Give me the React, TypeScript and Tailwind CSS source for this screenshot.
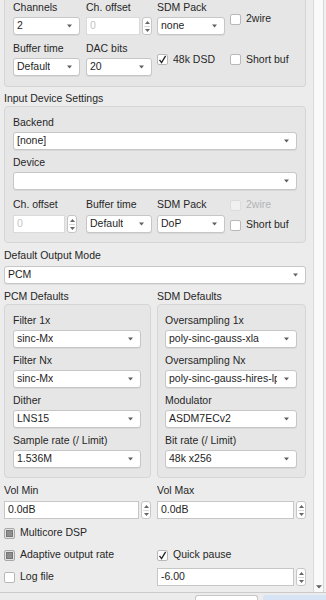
import { ReactNode } from "react";

const font = { fontFamily: '"Liberation Sans", Arial, sans-serif' };

// small label that sits above a control
const Label = ({ children, muted }: { children: ReactNode; muted?: boolean }) => (
  <div className={`h-[12px] leading-[12px] text-[10.5px] whitespace-nowrap ${muted ? "text-[#b4b4b4]" : "text-[#262626]"}`}>
    {children}
  </div>
);

const Arrow = () => (
  <svg width="5" height="4" viewBox="0 0 5 4" className="shrink-0">
    <path d="M0 0.5 L5 0.5 L2.5 3.5 Z" fill="#5f5f5f" />
  </svg>
);

const Combo = ({ value, w, clip }: { value?: string; w?: string; clip?: boolean }) => (
  <div
    className={`h-[18px] ${w ?? "w-full"} bg-white border border-[#c6c6c6] rounded-[3px] shadow-[0_1px_0_rgba(0,0,0,0.06)] flex items-center justify-between pl-[3px] pr-[7px] text-[10.5px] text-[#1e1e1e] overflow-hidden`}
  >
    <span className={`whitespace-nowrap overflow-hidden mr-[5px] ${clip ? "w-[108px]" : ""}`}>{value}</span>
    <Arrow />
  </div>
);

const Stepper = () => (
  <div className="w-[10px] h-full ml-[2px] bg-white border border-[#c6c6c6] rounded-[3px] flex flex-col items-center justify-center gap-[2px] shrink-0">
    <svg width="5" height="3" viewBox="0 0 5 3">
      <path d="M0 3 L5 3 L2.5 0 Z" fill="#666" />
    </svg>
    <div className="w-[6px] h-px bg-[#d8d8d8]" />
    <svg width="5" height="3" viewBox="0 0 5 3">
      <path d="M0 0 L5 0 L2.5 3 Z" fill="#666" />
    </svg>
  </div>
);

const Spin = ({ value, w, disabled }: { value: string; w?: string; disabled?: boolean }) => (
  <div className={`h-[18px] ${w ?? "w-full"} flex`}>
    <div
      className={`flex-1 h-full bg-white border ${disabled ? "border-[#dadada] text-[#c4c4c4]" : "border-[#c6c6c6] text-[#1e1e1e]"} flex items-center pl-[3px] text-[10.5px]`}
    >
      {value}
    </div>
    <Stepper />
  </div>
);

const Check = ({
  label,
  checked,
  mixed,
  disabled,
}: {
  label: string;
  checked?: boolean;
  mixed?: boolean;
  disabled?: boolean;
}) => (
  <div className="flex items-center gap-[5px] whitespace-nowrap">
    <div
      className={`w-[11px] h-[11px] rounded-[2px] border flex items-center justify-center shrink-0 ${
        disabled
          ? "border-[#dcdcdc] bg-[#f1f1f1]"
          : mixed
          ? "border-[#a8a8a8] bg-[#e2e2e2]"
          : "border-[#b8b8b8] bg-white"
      }`}
    >
      {checked && (
        <svg width="9" height="9" viewBox="0 0 9 9">
          <path d="M1.5 4.8 L3.6 7.6 L7.6 0.8" fill="none" stroke="#222" strokeWidth="1.3" />
        </svg>
      )}
      {mixed && <div className="w-[7px] h-[7px] bg-[#8e8e8e] border border-[#767676]" />}
    </div>
    <span className={`text-[10.5px] ${disabled ? "text-[#b4b4b4]" : "text-[#262626]"}`}>{label}</span>
  </div>
);

const Field = ({ label, children }: { label: string; children: ReactNode }) => (
  <div className="flex flex-col gap-[4px]">
    <Label>{label}</Label>
    {children}
  </div>
);

const Group = ({ children, className }: { children: ReactNode; className?: string }) => (
  <div className={`bg-[#e6e6e6] border border-[#d5d5d5] rounded-[4px] ${className ?? ""}`}>{children}</div>
);

export default function App() {
  return (
    <div className="w-[326px] h-[600px] overflow-hidden bg-[#ececec] flex flex-col" style={font}>
      <div className="flex h-[592px]">
        {/* main settings column */}
        <div className="w-[313px] pl-[4px] pr-[7px] flex flex-col">
          {/* output device group, top edge scrolled out of view */}
          <Group className="border-t-0 rounded-t-none pt-[1px] pb-[10px] pl-[8px]">
            <div className="grid grid-cols-[68px_66px_68px_1fr] gap-x-[5px] gap-y-[7px]">
              <Field label="Channels">
                <Combo value="2" w="w-[67px]" />
              </Field>
              <Field label="Ch. offset">
                <Spin value="0" disabled />
              </Field>
              <Field label="SDM Pack">
                <Combo value="none" />
              </Field>
              <div className="flex items-center pt-[2px]">
                <Check label="2wire" />
              </div>
              <Field label="Buffer time">
                <Combo value="Default" w="w-[67px]" />
              </Field>
              <Field label="DAC bits">
                <Combo value="20" />
              </Field>
              <div className="flex items-center pt-[1px]">
                <Check label="48k DSD" checked />
              </div>
              <div className="flex items-center pt-[1px]">
                <Check label="Short buf" />
              </div>
            </div>
          </Group>

          <div className="mt-[5px] mb-[2px]">
            <Label>Input Device Settings</Label>
          </div>
          <Group className="pt-[9px] pb-[9px] pl-[8px] pr-[8px]">
            <Field label="Backend">
              <Combo value="[none]" />
            </Field>
            <div className="mt-[6px]">
              <Field label="Device">
                <Combo />
              </Field>
            </div>
            <div className="mt-[6px] grid grid-cols-[68px_66px_68px_1fr] gap-x-[5px] gap-y-[4px]">
              <div className="h-[15px] flex items-center">
                <Label>Ch. offset</Label>
              </div>
              <div className="h-[15px] flex items-center">
                <Label>Buffer time</Label>
              </div>
              <div className="h-[15px] flex items-center">
                <Label>SDM Pack</Label>
              </div>
              <div className="h-[15px] flex items-center pt-[3px]">
                <Check label="2wire" disabled />
              </div>
              <Spin value="0" w="w-[64px]" disabled />
              <Combo value="Default" />
              <Combo value="DoP" />
              <div className="flex items-center pt-[2px]">
                <Check label="Short buf" />
              </div>
            </div>
          </Group>

          <div className="mt-[6px]">
            <Label>Default Output Mode</Label>
          </div>
          <div className="mt-[5px]">
            <Combo value="PCM" />
          </div>

          <div className="mt-[6px] grid grid-cols-[147px_149px] gap-x-[6px]">
            <div className="mb-[2px]">
              <Label>PCM Defaults</Label>
            </div>
            <div className="mb-[2px]">
              <Label>SDM Defaults</Label>
            </div>
            <Group className="pt-[9px] pb-[9px] pl-[8px] pr-[9px] flex flex-col gap-[6px]">
              <Field label="Filter 1x">
                <Combo value="sinc-Mx" />
              </Field>
              <Field label="Filter Nx">
                <Combo value="sinc-Mx" />
              </Field>
              <Field label="Dither">
                <Combo value="LNS15" />
              </Field>
              <Field label="Sample rate (/ Limit)">
                <Combo value="1.536M" />
              </Field>
            </Group>
            <Group className="pt-[9px] pb-[9px] pl-[7px] pr-[8px] flex flex-col gap-[6px]">
              <Field label="Oversampling 1x">
                <Combo value="poly-sinc-gauss-xla" />
              </Field>
              <Field label="Oversampling Nx">
                <Combo value="poly-sinc-gauss-hires-lp" clip />
              </Field>
              <Field label="Modulator">
                <Combo value="ASDM7ECv2" />
              </Field>
              <Field label="Bit rate (/ Limit)">
                <Combo value="48k x256" />
              </Field>
            </Group>

            <div className="mt-[6px]">
              <Label>Vol Min</Label>
            </div>
            <div className="mt-[6px]">
              <Label>Vol Max</Label>
            </div>
            <div className="mt-[5px]">
              <Spin value="0.0dB" />
            </div>
            <div className="mt-[5px]">
              <Spin value="0.0dB" />
            </div>

            <div className="mt-[3px] h-[22px] flex items-center">
              <Check label="Multicore DSP" mixed />
            </div>
            <div className="mt-[3px] h-[22px]" />
            <div className="h-[22px] flex items-center">
              <Check label="Adaptive output rate" mixed />
            </div>
            <div className="h-[22px] flex items-center">
              <Check label="Quick pause" checked />
            </div>
            <div className="h-[22px] flex items-center">
              <Check label="Log file" />
            </div>
            <div className="h-[22px] flex items-center">
              <Spin value="-6.00" />
            </div>
          </div>
        </div>

        {/* vertical scrollbar */}
        <div className="w-[13px] h-full flex border-l border-[#d9d9d9]">
          <div className="w-[9px] h-full bg-[#fafafa] flex flex-col justify-end items-center pb-[3px]">
            <svg width="6" height="4" viewBox="0 0 6 4">
              <path d="M0 0.3 L6 0.3 L3 3.6 Z" fill="#5f5f5f" />
            </svg>
          </div>
          <div className="w-px h-full bg-[#d6d6d6]" />
          <div className="flex-1 h-full bg-[#f1f1f1]" />
        </div>
      </div>

      {/* dialog button bar, mostly clipped */}
      <div className="flex-1 border-t border-[#cbcbcb] bg-[#ececec] flex items-end pl-[195px] gap-[5px]">
        <div className="w-[63px] h-[5px] bg-white border border-b-0 border-[#c6c6c6] rounded-t-[3px]" />
        <div className="flex-1 h-[5px] bg-[#d6e4f5] rounded-tl-[3px]" />
      </div>
    </div>
  );
}
